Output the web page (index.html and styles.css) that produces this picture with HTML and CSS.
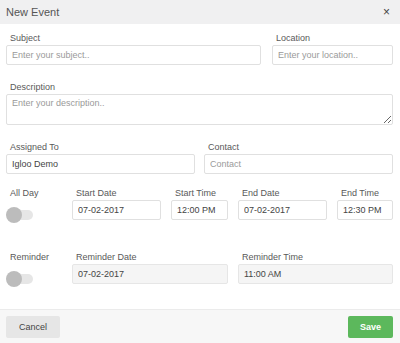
FILE: index.html
```html
<!DOCTYPE html>
<html lang="en">
<head>
    <meta charset="UTF-8">
    <meta name="viewport" content="width=device-width, initial-scale=1.0">
    <title>New Event</title>
    <link rel="stylesheet" href="styles.css">
</head>
<body>

<div id="modal">
    <div class="modal-header">
        <span class="modal-title">New Event</span>
        <span class="close">&times;</span>
    </div>

    <div class="modal-body">
        <div class="row row-subject">
            <div class="field">
                <label>Subject</label>
                <input type="text" placeholder="Enter your subject..">
            </div>
            <div class="field">
                <label>Location</label>
                <input type="text" placeholder="Enter your location..">
            </div>
        </div>

        <div class="row">
            <div class="field">
                <label>Description</label>
                <textarea placeholder="Enter your description.."></textarea>
            </div>
        </div>

        <div class="row row-halves">
            <div class="field">
                <label>Assigned To</label>
                <input type="text" value="Igloo Demo">
            </div>
            <div class="field">
                <label>Contact</label>
                <input type="text" placeholder="Contact">
            </div>
        </div>

        <div class="row row-dates">
            <div class="field">
                <label>All Day</label>
                <span class="toggle"></span>
            </div>
            <div class="field">
                <label>Start Date</label>
                <input type="text" value="07-02-2017">
            </div>
            <div class="field">
                <label>Start Time</label>
                <input type="text" value="12:00 PM">
            </div>
            <div class="field">
                <label>End Date</label>
                <input type="text" value="07-02-2017">
            </div>
            <div class="field">
                <label>End Time</label>
                <input type="text" value="12:30 PM">
            </div>
        </div>

        <div class="row row-dates row-reminder">
            <div class="field">
                <label>Reminder</label>
                <span class="toggle"></span>
            </div>
            <div class="field span-2">
                <label>Reminder Date</label>
                <input type="text" value="07-02-2017" disabled>
            </div>
            <div class="field span-2">
                <label>Reminder Time</label>
                <input type="text" value="11:00 AM" disabled>
            </div>
        </div>
    </div>

    <div class="modal-footer">
        <button class="btn btn-cancel">Cancel</button>
        <button class="btn btn-save">Save</button>
    </div>
</div>

</body>
</html>
```

FILE: styles.css
```css
body {
    font-family: "Liberation Sans", Arial, sans-serif;
    margin: 0;
    background-color: #fff;
    color: #555;
}
#modal {
    display: flex;
    flex-direction: column;
    height: 343px;
    overflow: hidden;
}
.modal-header {
    height: 24px;
    background-color: #f0f0f1;
    display: flex;
    align-items: center;
    justify-content: space-between;
    padding: 0 10px 0 6px;
}
.modal-title {
    font-size: 11px;
    color: #555;
}
.close {
    font-size: 12px;
    color: #444;
}
.modal-body {
    flex: 1;
    padding: 8px 7px 0 6px;
}
.row {
    display: grid;
    grid-template-columns: minmax(0, 1fr);
    column-gap: 10px;
    margin-bottom: 16px;
}
.row-subject {
    grid-template-columns: 255px minmax(0, 1fr);
    column-gap: 11px;
}
.row-halves {
    grid-template-columns: minmax(0, 1fr) minmax(0, 1fr);
    column-gap: 9px;
    margin-bottom: 13px;
}
.row-dates {
    grid-template-columns: 56px 89px 57px 89px minmax(0, 1fr);
    margin-bottom: 14px;
}
.row-reminder {
    margin-top: 31px;
}
.span-2 {
    grid-column: span 2;
}
.field {
    display: flex;
    flex-direction: column;
    min-width: 0;
}
.field label {
    font-size: 9px;
    line-height: 12px;
    padding-left: 4px;
    margin-bottom: 1px;
    color: #595959;
}
.field input,
.field textarea {
    box-sizing: border-box;
    width: 100%;
    min-width: 0;
    height: 20px;
    border: 1px solid #e0e0e0;
    border-radius: 2px;
    padding: 0 5px;
    font-family: inherit;
    font-size: 9px;
    color: #444;
    background-color: #fff;
    outline: none;
}
.field textarea {
    height: 31px;
    padding-top: 3px;
    resize: vertical;
}
.field input::placeholder,
.field textarea::placeholder {
    color: #9a9a9a;
}
.field input:disabled {
    background-color: #f5f5f5;
    border-color: #e6e6e6;
}
.toggle {
    position: relative;
    display: block;
    width: 24px;
    height: 10px;
    margin: 10px 0 0 3px;
    background-color: #e6e6e6;
    border-radius: 5px;
}
.toggle::before {
    content: "";
    position: absolute;
    left: -3px;
    top: -3px;
    width: 16px;
    height: 16px;
    border-radius: 50%;
    background-color: #bcbcbc;
}
.modal-footer {
    height: 34px;
    box-sizing: border-box;
    border-top: 1px solid #ebebeb;
    background-color: #f7f7f7;
    display: flex;
    align-items: center;
    justify-content: space-between;
    padding: 0 7px 0 6px;
}
.btn {
    height: 22px;
    border: none;
    border-radius: 2px;
    font-family: inherit;
    font-size: 9px;
    cursor: pointer;
}
.btn-cancel {
    width: 54px;
    background-color: #e6e6e6;
    color: #444;
}
.btn-save {
    width: 45px;
    background-color: #5cb85c;
    color: #fff;
    font-weight: bold;
}
```
